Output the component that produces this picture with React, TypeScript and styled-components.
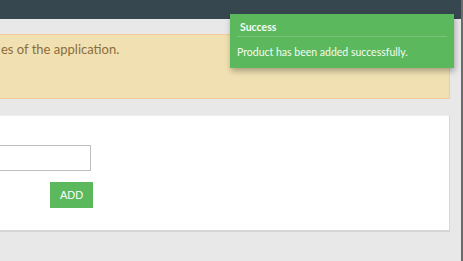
import * as React from 'react'
import styled, { createGlobalStyle } from 'styled-components'

const GlobalStyle = createGlobalStyle`
  html, body {
    margin: 0;
    padding: 0;
    background: #e8e8e8;
    overflow: hidden;
    font-family: Lato, "Open Sans", sans-serif;
  }
`

const Page = styled.div`
  display: flex;
  height: 261px;
`

const Main = styled.div`
  flex: 1;
  display: flex;
  flex-direction: column;
  position: relative;
`

const Scrollbar = styled.div`
  width: 2px;
  background: #6b6b6b;
`

const Header = styled.header`
  height: 19px;
  background: #37474f;
`

const Content = styled.div`
  display: flex;
  flex-direction: column;
  gap: 16px;
  padding-top: 15px;
  margin-left: -20px;
  margin-right: 11px;
`

const Warning = styled.div`
  height: 65px;
  box-sizing: border-box;
  background: #f1e1b2;
  border: 1px solid #f5c99c;
  padding: 5px 20px;
  font-size: 13px;
  line-height: 18px;
  color: #8a6d3b;
`

const Card = styled.div`
  background: #fff;
  border-top: 1px solid #ececec;
  border-right: 1px solid #d8d8d8;
  border-bottom: 2px solid #d6d6d6;
  padding: 29px 0 22px 0;
  display: flex;
  flex-direction: column;
  gap: 11px;
`

const Input = styled.input`
  width: 111px;
  height: 26px;
  box-sizing: border-box;
  border: 1px solid #bdbdbd;
  outline: none;
`

const AddButton = styled.button`
  margin-left: 70px;
  width: 43px;
  height: 26px;
  border: none;
  background: #5cb85c;
  color: #fff;
  font-family: "Liberation Sans", Arial, sans-serif;
  font-size: 11px;
  padding: 0;
`

const Toast = styled.div`
  position: absolute;
  top: 14px;
  left: 230px;
  width: 224px;
  height: 54px;
  box-sizing: border-box;
  background: #5cb85c;
  color: #f4fbf4;
  padding: 0 7px;
  box-shadow: 1px 3px 6px rgba(0, 0, 0, 0.3);
`

const ToastTitle = styled.div`
  font-weight: 700;
  font-size: 10.5px;
  line-height: 14px;
  padding: 6px 0 2px 3px;
  border-bottom: 1px solid rgba(255, 255, 255, 0.18);
`

const ToastBody = styled.div`
  font-size: 10.5px;
  line-height: 14px;
  padding-top: 8px;
`

export default function App() {
  return (
    <>
      <GlobalStyle />
      <Page>
        <Main>
          <Header />
          <Content>
            <Warning>es of the application.</Warning>
            <Card>
              <Input />
              <AddButton>ADD</AddButton>
            </Card>
          </Content>
          <Toast>
            <ToastTitle>Success</ToastTitle>
            <ToastBody>Product has been added successfully.</ToastBody>
          </Toast>
        </Main>
        <Scrollbar />
      </Page>
    </>
  )
}
